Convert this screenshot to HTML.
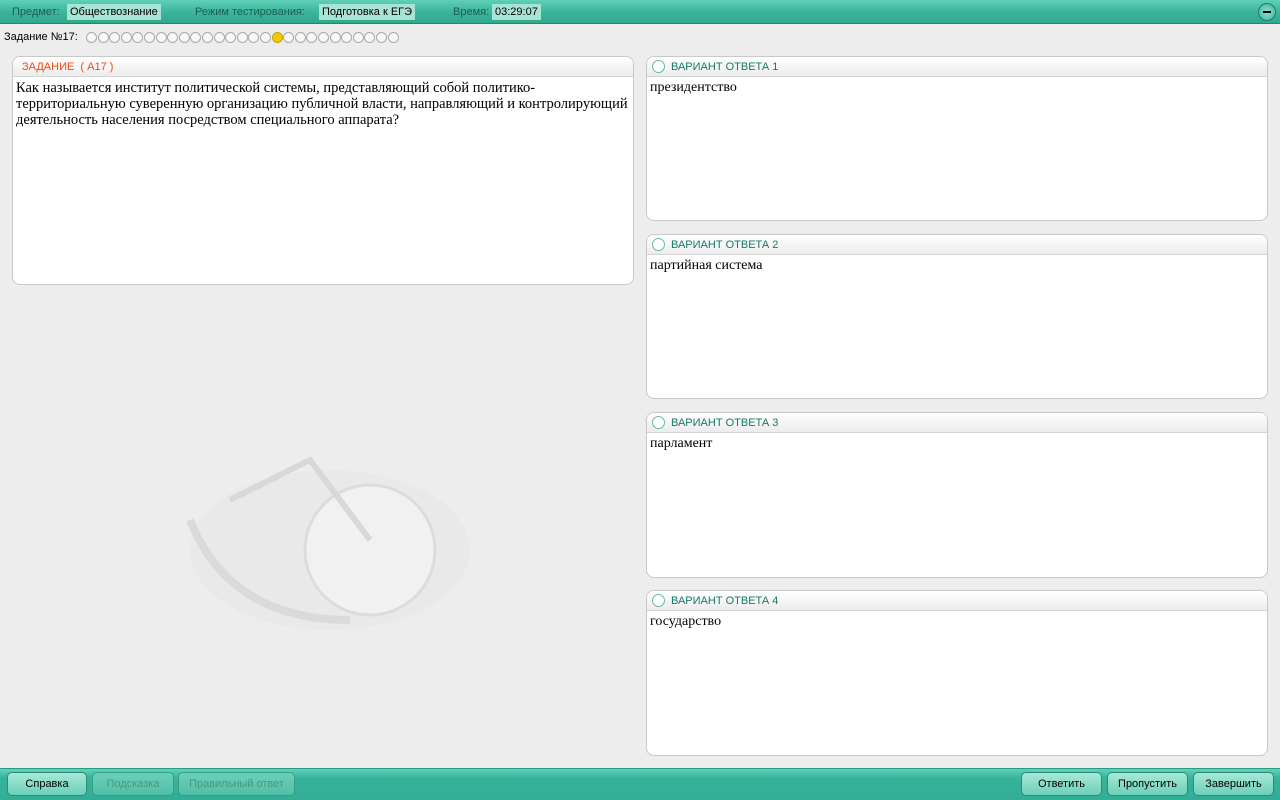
<!DOCTYPE html>
<html><head><meta charset="utf-8"><style>
*{box-sizing:border-box;margin:0;padding:0}
body{width:1280px;height:800px;overflow:hidden;background:#ededed;font-family:"Liberation Sans",sans-serif;position:relative}
.top{position:absolute;left:0;top:0;width:1280px;height:24px;background:linear-gradient(#5fd0b8,#3db59c 50%,#2fa88e);border-bottom:1px solid #1f8a72}
.top .l{position:absolute;top:6px;font-size:11px;color:#1d5e50}
.top .v{position:absolute;top:4px;height:16px;background:#a8e4d6;font-size:11px;color:#000;padding:2px 3px}
.min{position:absolute;right:4px;top:3px;width:18px;height:18px;border-radius:50%;border:1px solid #1f7a66;background:radial-gradient(#8fe0cc,#3cb39a)}
.min:after{content:"";position:absolute;left:4px;top:7px;width:8px;height:2px;background:#000}
.nav{position:absolute;left:4px;top:31px;font-size:11px;color:#000}
.dot{position:absolute;top:32px;width:11px;height:11px;border-radius:50%;border:1px solid #a9a9a9;background:#f8f8f8}
.panel{position:absolute;background:#fff;border:1px solid #c8c8c8;border-radius:8px;overflow:hidden}
.hd{height:20px;background:linear-gradient(#fff,#ececec);border-bottom:1px solid #d4d4d4;font-size:11px;padding:4px 0 0 24px;color:#147a66;position:relative}
.hd .r{position:absolute;left:5px;top:3px;width:13px;height:13px;border-radius:50%;border:1px solid #6bb7a5;background:#fff}
.tx{font-family:"Liberation Serif",serif;font-size:14px;padding:3px 3px;color:#000;line-height:16px}
.bot{position:absolute;left:0;top:768px;width:1280px;height:32px;background:linear-gradient(#5fd3bb,#36b29a 30%,#32ae96);border-top:1px solid #2a9a82}
.btn{position:absolute;top:772px;height:24px;border-radius:5px;border:1px solid #2c8a76;background:linear-gradient(#a6e8d8,#6cd0b8);font-size:11px;text-align:center;line-height:22px;color:#000}
.dis{color:#4c9484;background:linear-gradient(#6cd0b8,#4fbfa6);border-color:#3a9c86}
</style></head><body>
<div class="top">
<span class="l" style="left:12px">Предмет:</span><span class="v" style="left:67px">Обществознание</span>
<span class="l" style="left:195px">Режим тестирования:</span><span class="v" style="left:319px">Подготовка к ЕГЭ</span>
<span class="l" style="left:453px">Время:</span><span class="v" style="left:492px">03:29:07</span>
<div class="min"></div></div>
<div class="nav">Задание №17:</div>
<div id="dots"></div>
<div class="panel" style="left:12px;top:56px;width:622px;height:229px">
<div class="hd" style="padding-left:9px;color:#f04a10">ЗАДАНИЕ &nbsp;( А17 )</div>
<div class="tx" style="font-size:14.5px;padding-right:2px">Как называется институт политической системы, представляющий собой политико-территориальную суверенную организацию публичной власти, направляющий и контролирующий деятельность населения посредством специального аппарата?</div></div>
<div class="panel" style="left:646px;top:56px;width:622px;height:165px"><div class="hd"><span class="r"></span>ВАРИАНТ ОТВЕТА 1</div><div class="tx">президентство</div></div>
<div class="panel" style="left:646px;top:234px;width:622px;height:165px"><div class="hd"><span class="r"></span>ВАРИАНТ ОТВЕТА 2</div><div class="tx">партийная система</div></div>
<div class="panel" style="left:646px;top:412px;width:622px;height:166px"><div class="hd"><span class="r"></span>ВАРИАНТ ОТВЕТА 3</div><div class="tx">парламент</div></div>
<div class="panel" style="left:646px;top:590px;width:622px;height:166px"><div class="hd"><span class="r"></span>ВАРИАНТ ОТВЕТА 4</div><div class="tx">государство</div></div>
<svg style="position:absolute;left:170px;top:420px" width="320" height="220"><ellipse cx="160" cy="130" rx="140" ry="80" fill="#e9e9e9"/><circle cx="200" cy="130" r="65" fill="#f1f1f1" stroke="#dcdcdc" stroke-width="3"/><path d="M20 100 Q60 200 180 200" stroke="#dadada" stroke-width="8" fill="none"/><path d="M60 80 L140 40 L200 120" stroke="#d8d8d8" stroke-width="6" fill="none"/></svg>
<div class="bot"></div>
<div class="btn" style="left:7px;width:80px">Справка</div>
<div class="btn dis" style="left:92px;width:82px">Подсказка</div>
<div class="btn dis" style="left:178px;width:117px">Правильный ответ</div>
<div class="btn" style="left:1021px;width:81px">Ответить</div>
<div class="btn" style="left:1107px;width:81px">Пропустить</div>
<div class="btn" style="left:1193px;width:81px">Завершить</div>
<script>
var h='';for(var i=0;i<27;i++){h+='<div class="dot" style="left:'+(86+i*11.6)+'px;'+(i==16?'background:#f5c800;border-color:#c9a200':'')+'"></div>'}
document.getElementById('dots').innerHTML=h;
</script>
</body></html>
